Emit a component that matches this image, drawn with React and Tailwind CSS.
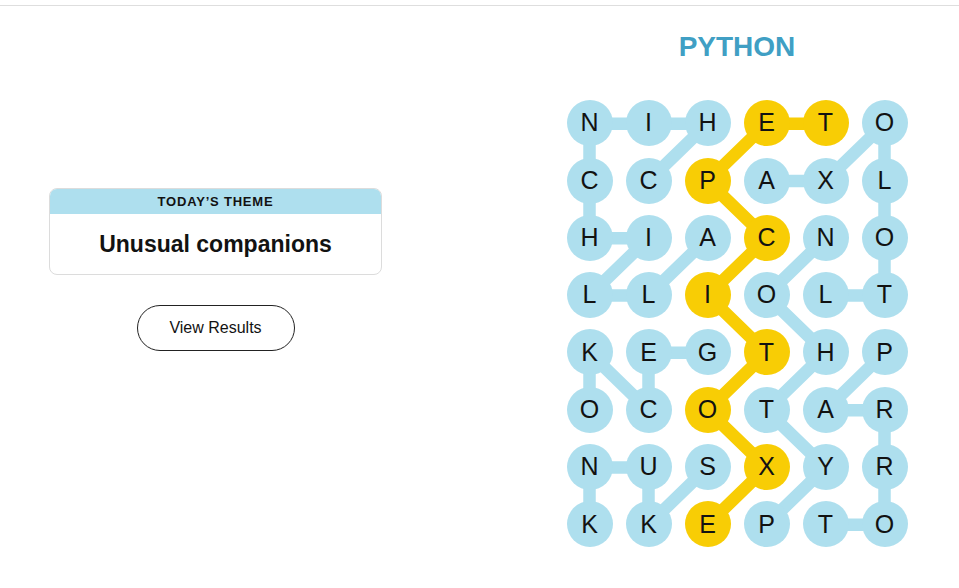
const letters = [
  "NIHETO",
  "CCPAXL",
  "HIACNO",
  "LLIOLT",
  "KEGTHP",
  "OCOTAR",
  "NUSXYR",
  "KKEPTO",
];

// cells that belong to the spangram (row, col)
const spangram = [
  [7, 2], [6, 3], [5, 2], [4, 3], [3, 2], [2, 3], [1, 2], [0, 3], [0, 4],
];

const blueWords = [
  [[1, 1], [0, 2], [0, 1], [0, 0], [1, 0], [2, 0], [2, 1], [3, 0], [3, 1], [2, 2]],
  [[1, 3], [1, 4], [0, 5], [1, 5], [2, 5], [3, 5], [3, 4]],
  [[7, 3], [6, 4], [5, 3], [4, 4], [3, 3], [2, 4]],
  [[4, 5], [5, 4], [5, 5], [6, 5], [7, 5], [7, 4]],
  [[4, 2], [4, 1], [5, 1], [4, 0], [5, 0]],
  [[6, 2], [7, 1], [6, 1], [6, 0], [7, 0]],
];

const CW = 59;
const CH = 57.3;
const cx = (c) => CW / 2 + CW * c;
const cy = (r) => CH / 2 + CH * r;

const isGold = (r, c) => spangram.some(([a, b]) => a === r && b === c);

const Path = ({ cells, color }) => (
  <polyline
    points={cells.map(([r, c]) => `${cx(c)},${cy(r)}`).join(" ")}
    fill="none"
    stroke={color}
    strokeWidth="12.5"
    strokeLinejoin="round"
  />
);

const Board = () => (
  <div className="relative w-[354px] h-[458.4px]">
    <svg className="absolute inset-0" width="354" height="458.4">
      {blueWords.map((w, i) => (
        <Path key={i} cells={w} color="#aedfee" />
      ))}
      <Path cells={spangram} color="#f8cd05" />
    </svg>
    <div className="relative grid grid-cols-[repeat(6,59px)] grid-rows-[repeat(8,57.3px)]">
      {letters.map((row, r) =>
        row.split("").map((ch, c) => (
          <div key={`${r}-${c}`} className="flex items-center justify-center">
            <div
              className={`w-[46px] h-[46px] rounded-full flex items-center justify-center text-[25px] text-[#121212] ${
                isGold(r, c) ? "bg-[#f8cd05]" : "bg-[#aedfee]"
              }`}
            >
              {ch}
            </div>
          </div>
        ))
      )}
    </div>
  </div>
);

const App = () => {
  return (
    <div className="min-h-screen bg-white font-['Liberation_Sans',Arial,sans-serif] text-black">
      <div className="h-[6px] border-b border-[#dedede]" />
      <div className="flex">
        <div className="w-[560px] pl-[49px] pt-[182px]">
          <div className="w-[333px] flex flex-col items-center">
            <div className="w-full rounded-lg border border-[#dcdcdc] overflow-hidden">
              <div className="h-[25px] bg-[#aedfee] flex items-center justify-center text-[13px] font-bold tracking-[0.8px] text-[#121212]">
                TODAY’S THEME
              </div>
              <div className="h-[60px] flex items-center justify-center text-[23px] font-bold text-[#121212]">
                Unusual companions
              </div>
            </div>
            <button className="mt-[30px] w-[158px] h-[46px] rounded-full border border-[#222] text-[16px] text-[#121212] bg-white">
              View Results
            </button>
          </div>
        </div>
        <div className="w-[354px]">
          <h1 className="mt-[27px] text-center text-[28px] leading-none font-bold text-[#409fc4]">
            PYTHON
          </h1>
          <div className="mt-[33.6px]">
            <Board />
          </div>
        </div>
      </div>
    </div>
  );
};

export default App;
